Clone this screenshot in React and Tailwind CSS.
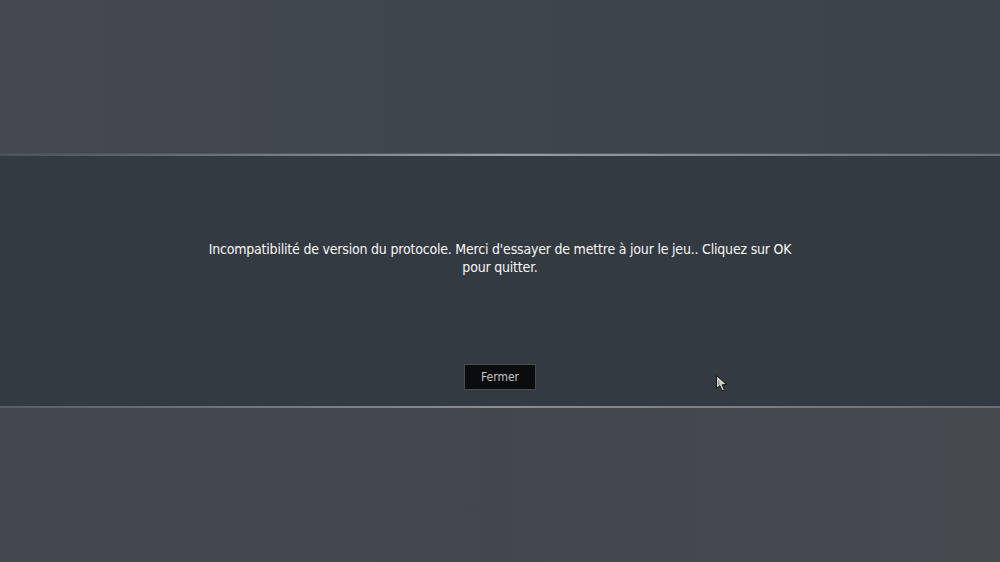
import React from 'react';

const FONT = { fontFamily: '"DejaVu Sans Condensed", "DejaVu Sans", sans-serif' };

function Cursor() {
  return (
    <svg className="absolute left-[715px] top-[374px]" width="13" height="18" viewBox="0 0 13 18">
      <path d="M1.5 1.5 L1.5 14.5 L4.8 11.6 L7.2 16.8 L9.4 15.8 L7.1 10.8 L11.5 10.4 Z" fill="#cfcfcf" stroke="#161616" strokeWidth="1" strokeLinejoin="round" />
      <path d="M3 5 L3 11.5 L5 9.8 Z" fill="#9a9a9a" />
    </svg>
  );
}

export default function App() {
  return (
    <div className="relative w-[1000px] h-[562px] overflow-hidden flex flex-col bg-[#41464d]" style={FONT}>
      {/* Top backdrop */}
      <div className="h-[153px] bg-gradient-to-r from-[#44494f] via-[#3f454c] to-[#3d434a]" />

      {/* Top rule */}
      <div className="h-[1px] bg-gradient-to-r from-[#4a4f55] via-[#5a5f65] to-[#4a4f55]" />
      <div className="h-[2px] bg-gradient-to-r from-[#4d5258] via-[#9a9ea3] to-[#6a6e73]" />

      {/* Dialog band */}
      <div className="h-[250px] bg-[#343a42] flex flex-col items-center">
        <p className="mt-[84px] w-[604px] text-center text-[14px] leading-[18px] tracking-[-0.2px] text-[#f7f7f7]">
          Incompatibilité de version du protocole. Merci d'essayer de mettre à jour le jeu.. Cliquez sur OK pour quitter.
        </p>
        <button className="mt-[88px] w-[72px] h-[26px] bg-[#0b0c0d] border border-[#474c52] text-[12px] text-[#c4c4c4]" style={FONT}>
          Fermer
        </button>
      </div>

      {/* Bottom rule */}
      <div className="h-[2px] bg-gradient-to-r from-[#5a5f65] via-[#8c9095] to-[#6a6e73]" />

      {/* Bottom backdrop */}
      <div className="flex-1 bg-gradient-to-r from-[#44484e] via-[#43474d] to-[#46494e]" />

      <Cursor />
    </div>
  );
}
